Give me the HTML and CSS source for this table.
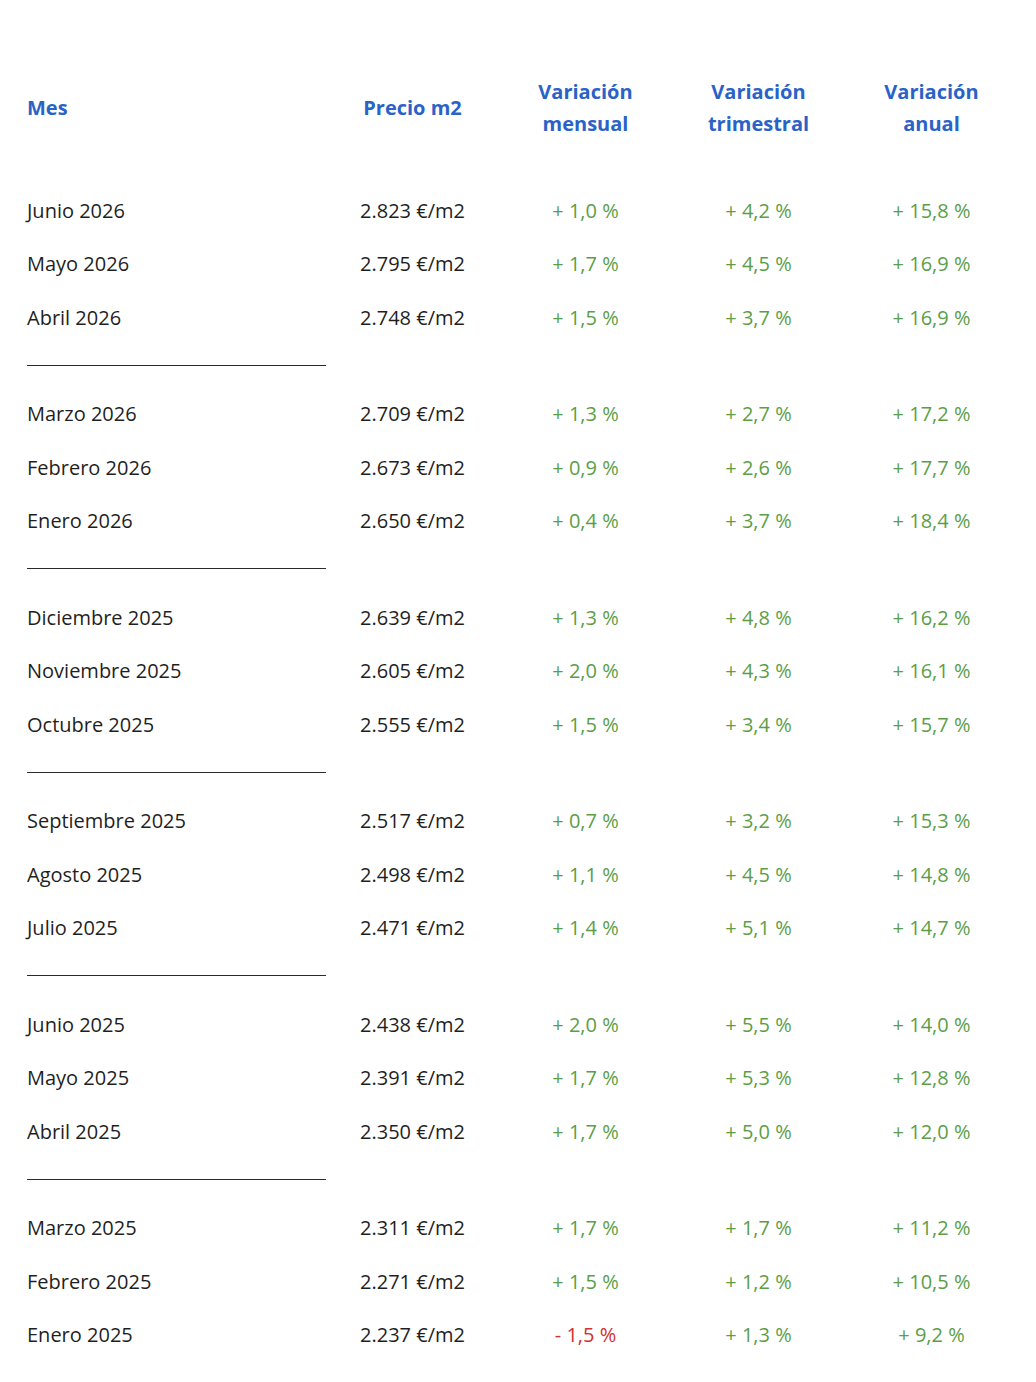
FILE: index.html
```html
<!DOCTYPE html>
<html lang="es">
<head>
<meta charset="utf-8">
<title>Precio m2</title>
<link rel="stylesheet" href="styles.css">
</head>
<body>
<div class="table">
  <div class="row head">
    <div class="c first">Mes</div>
    <div class="c">Precio m2</div>
    <div class="c">Variación<br>mensual</div>
    <div class="c">Variación<br>trimestral</div>
    <div class="c">Variación<br>anual</div>
  </div>

  <div class="row"><div class="c first">Junio 2026</div><div class="c">2.823 €/m2</div><div class="c up">+ 1,0 %</div><div class="c up">+ 4,2 %</div><div class="c up">+ 15,8 %</div></div>
  <div class="row"><div class="c first">Mayo 2026</div><div class="c">2.795 €/m2</div><div class="c up">+ 1,7 %</div><div class="c up">+ 4,5 %</div><div class="c up">+ 16,9 %</div></div>
  <div class="row"><div class="c first">Abril 2026</div><div class="c">2.748 €/m2</div><div class="c up">+ 1,5 %</div><div class="c up">+ 3,7 %</div><div class="c up">+ 16,9 %</div></div>
  <div class="divider"></div>

  <div class="row"><div class="c first">Marzo 2026</div><div class="c">2.709 €/m2</div><div class="c up">+ 1,3 %</div><div class="c up">+ 2,7 %</div><div class="c up">+ 17,2 %</div></div>
  <div class="row"><div class="c first">Febrero 2026</div><div class="c">2.673 €/m2</div><div class="c up">+ 0,9 %</div><div class="c up">+ 2,6 %</div><div class="c up">+ 17,7 %</div></div>
  <div class="row"><div class="c first">Enero 2026</div><div class="c">2.650 €/m2</div><div class="c up">+ 0,4 %</div><div class="c up">+ 3,7 %</div><div class="c up">+ 18,4 %</div></div>
  <div class="divider"></div>

  <div class="row"><div class="c first">Diciembre 2025</div><div class="c">2.639 €/m2</div><div class="c up">+ 1,3 %</div><div class="c up">+ 4,8 %</div><div class="c up">+ 16,2 %</div></div>
  <div class="row"><div class="c first">Noviembre 2025</div><div class="c">2.605 €/m2</div><div class="c up">+ 2,0 %</div><div class="c up">+ 4,3 %</div><div class="c up">+ 16,1 %</div></div>
  <div class="row"><div class="c first">Octubre 2025</div><div class="c">2.555 €/m2</div><div class="c up">+ 1,5 %</div><div class="c up">+ 3,4 %</div><div class="c up">+ 15,7 %</div></div>
  <div class="divider"></div>

  <div class="row"><div class="c first">Septiembre 2025</div><div class="c">2.517 €/m2</div><div class="c up">+ 0,7 %</div><div class="c up">+ 3,2 %</div><div class="c up">+ 15,3 %</div></div>
  <div class="row"><div class="c first">Agosto 2025</div><div class="c">2.498 €/m2</div><div class="c up">+ 1,1 %</div><div class="c up">+ 4,5 %</div><div class="c up">+ 14,8 %</div></div>
  <div class="row"><div class="c first">Julio 2025</div><div class="c">2.471 €/m2</div><div class="c up">+ 1,4 %</div><div class="c up">+ 5,1 %</div><div class="c up">+ 14,7 %</div></div>
  <div class="divider"></div>

  <div class="row"><div class="c first">Junio 2025</div><div class="c">2.438 €/m2</div><div class="c up">+ 2,0 %</div><div class="c up">+ 5,5 %</div><div class="c up">+ 14,0 %</div></div>
  <div class="row"><div class="c first">Mayo 2025</div><div class="c">2.391 €/m2</div><div class="c up">+ 1,7 %</div><div class="c up">+ 5,3 %</div><div class="c up">+ 12,8 %</div></div>
  <div class="row"><div class="c first">Abril 2025</div><div class="c">2.350 €/m2</div><div class="c up">+ 1,7 %</div><div class="c up">+ 5,0 %</div><div class="c up">+ 12,0 %</div></div>
  <div class="divider"></div>

  <div class="row"><div class="c first">Marzo 2025</div><div class="c">2.311 €/m2</div><div class="c up">+ 1,7 %</div><div class="c up">+ 1,7 %</div><div class="c up">+ 11,2 %</div></div>
  <div class="row"><div class="c first">Febrero 2025</div><div class="c">2.271 €/m2</div><div class="c up">+ 1,5 %</div><div class="c up">+ 1,2 %</div><div class="c up">+ 10,5 %</div></div>
  <div class="row"><div class="c first">Enero 2025</div><div class="c">2.237 €/m2</div><div class="c down">- 1,5 %</div><div class="c up">+ 1,3 %</div><div class="c up">+ 9,2 %</div></div>
</div>
</body>
</html>
```

FILE: styles.css
```css
html, body {
  margin: 0;
  padding: 0;
  background: #ffffff;
}

body {
  font-family: "Open Sans", "Noto Sans", "Liberation Sans", sans-serif;
  font-size: 20px;
  color: #1f1f1f;
}

.table {
  padding: 76px 0 0 27px;
}

.row {
  display: grid;
  grid-template-columns: 299px repeat(4, 173px);
  height: 53.5px;
  align-items: center;
}

.row.head {
  height: 64px;
  margin-bottom: 43.3px;
  font-weight: 700;
  color: #2a62c8;
  line-height: 32px;
}

.c {
  text-align: center;
  white-space: nowrap;
}

.c.first {
  text-align: left;
}

.up {
  color: #5c9e47;
}

.down {
  color: #d2312b;
}

.divider {
  width: 299px;
  height: 1px;
  background: #2a2a2a;
  margin: 21px 0;
}
```
